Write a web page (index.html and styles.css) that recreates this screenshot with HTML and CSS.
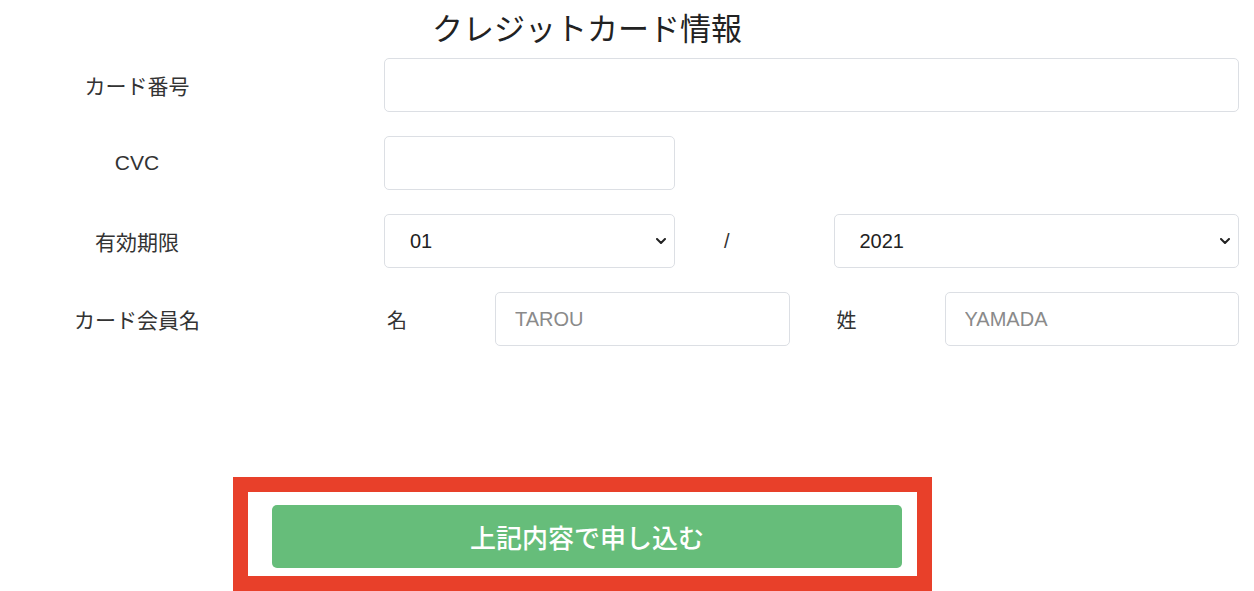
FILE: index.html
```html
<!DOCTYPE html>
<html lang="ja">
<head>
  <meta charset="UTF-8" />
  <meta name="viewport" content="width=device-width, initial-scale=1.0"/>
  <title>クレジットカード情報</title>
  <link rel="stylesheet" href="styles.css">
</head>
<body>
  <h1 class="title">クレジットカード情報</h1>

  <form class="card-form" onsubmit="return false;">
    <div class="row">
      <label class="row-label" for="cardNumber">カード番号</label>
      <div class="row-field">
        <input class="field" type="text" id="cardNumber" />
      </div>
    </div>

    <div class="row">
      <label class="row-label" for="cvc">CVC</label>
      <div class="row-field">
        <input class="field field-short" type="text" id="cvc" />
      </div>
    </div>

    <div class="row">
      <label class="row-label" for="expMonth">有効期限</label>
      <div class="row-field halves">
        <div class="half expiry">
          <div class="select-wrap">
            <select class="field select" id="expMonth">
              <option>01</option><option>02</option><option>03</option><option>04</option>
              <option>05</option><option>06</option><option>07</option><option>08</option>
              <option>09</option><option>10</option><option>11</option><option>12</option>
            </select>
            <svg class="chevron" viewBox="0 0 10 6" width="10" height="6"><path d="M1 1 L5 5 L9 1" fill="none" stroke="#222" stroke-width="2" stroke-linecap="round" stroke-linejoin="round"/></svg>
          </div>
          <span class="slash">/</span>
        </div>
        <div class="half">
          <div class="select-wrap">
            <select class="field select" id="expYear">
              <option>2021</option><option>2022</option><option>2023</option>
              <option>2024</option><option>2025</option><option>2026</option>
            </select>
            <svg class="chevron" viewBox="0 0 10 6" width="10" height="6"><path d="M1 1 L5 5 L9 1" fill="none" stroke="#222" stroke-width="2" stroke-linecap="round" stroke-linejoin="round"/></svg>
          </div>
        </div>
      </div>
    </div>

    <div class="row">
      <label class="row-label" for="firstName">カード会員名</label>
      <div class="row-field halves">
        <div class="half name">
          <span class="name-label">名</span>
          <input class="field" type="text" id="firstName" placeholder="TAROU" />
        </div>
        <div class="half name">
          <span class="name-label">姓</span>
          <input class="field" type="text" id="lastName" placeholder="YAMADA" />
        </div>
      </div>
    </div>
  </form>

  <div class="submit-frame">
    <button class="submit-btn" type="button">上記内容で申し込む</button>
  </div>
</body>
</html>
```

FILE: styles.css
```css
body { margin: 0; font-family: "Liberation Sans", "Noto Sans CJK JP", sans-serif; color: #333; background: #fff; }

.title { margin: 0; padding: 8px 80px 0 0; font-size: 31px; line-height: 37px; font-weight: normal; text-align: center; color: #222; font-family: "Noto Sans CJK JP", sans-serif; }

.card-form { margin-top: 13px; padding-right: 15px; display: flex; flex-direction: column; gap: 24px; }
.row { display: grid; grid-template-columns: 274px 1fr; column-gap: 110px; align-items: center; height: 54px; }
.row-label { text-align: center; font-size: 21px; color: #333; }

.field { display: block; width: 100%; height: 54px; box-sizing: border-box; border: 1px solid #dcdfe4; border-radius: 5px; padding: 0 19px; font-size: 20px; font-family: inherit; color: #222; background: #fff; outline: none; }
.field::placeholder { color: #8a8a8a; }
.field-short { width: 291px; }

.halves { display: grid; grid-template-columns: 1fr 1fr; column-gap: 44px; }
.half { display: flex; align-items: center; }
.expiry .select-wrap { width: 291px; flex: none; }
.slash { padding-left: 49px; font-size: 20px; color: #333; }

.select-wrap { position: relative; width: 100%; }
.select { appearance: none; -webkit-appearance: none; padding-left: 25px; cursor: pointer; }
.chevron { position: absolute; right: 9px; top: 50%; transform: translateY(-50%); pointer-events: none; }

.name { display: grid; grid-template-columns: 111px 1fr; align-items: center; }
.name-label { padding-left: 3px; font-size: 20px; color: #333; font-family: "Noto Sans CJK JP", sans-serif; }

.submit-frame { margin: 131px 0 0 233px; width: 699px; box-sizing: border-box; border: 15px solid #e8402a; padding: 13px 15px 8px 24px; }
.submit-btn { display: block; width: 100%; height: 63px; border: none; border-radius: 5px; background: #66bd7a; color: #fff; font-size: 26px; font-weight: 500; font-family: "Noto Sans CJK JP", sans-serif; cursor: pointer; }
```
